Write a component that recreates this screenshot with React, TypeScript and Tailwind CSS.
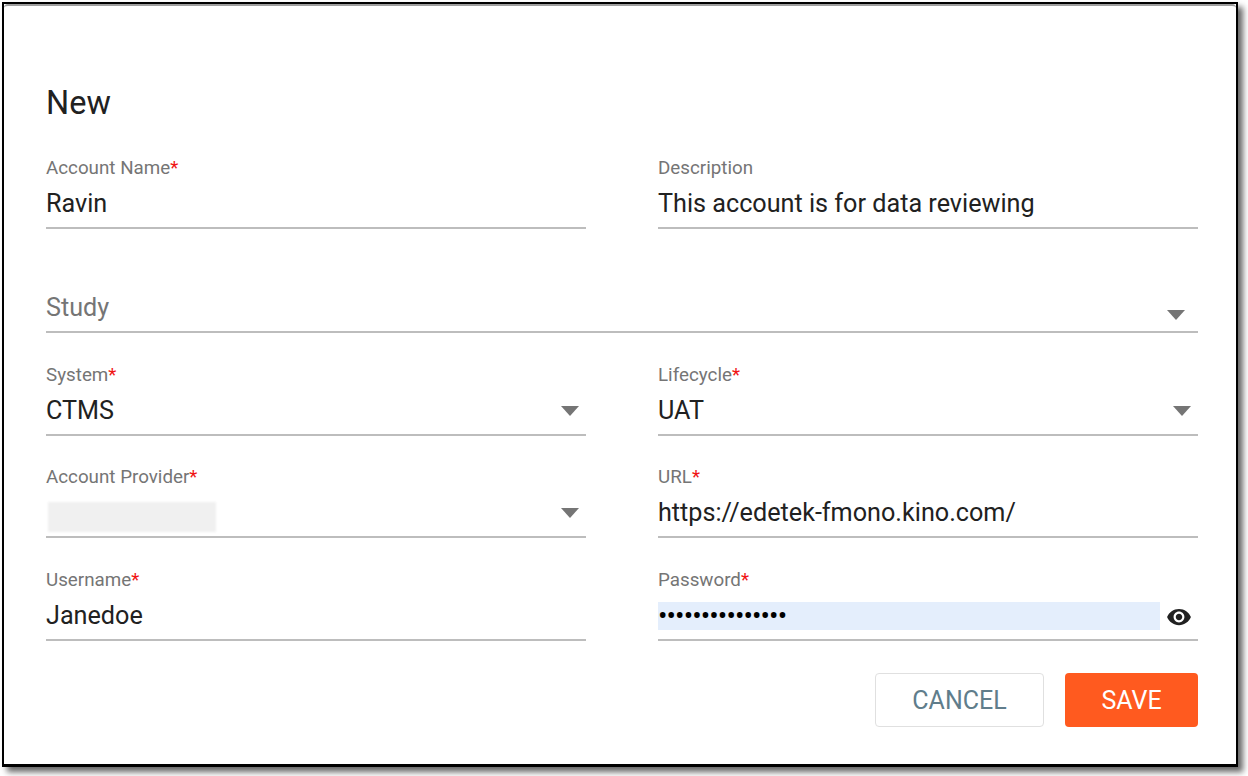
import React from 'react';

function Caret({ className = '' }: { className?: string }) {
  return (
    <svg width="20" height="10" viewBox="0 0 20 10" className={className}>
      <path d="M1 0h18l-9 10z" fill="#757575" />
    </svg>
  );
}

function Label({ text, required }: { text: string; required?: boolean }) {
  return (
    <div className="h-[24px] text-[18.8px] leading-[22px] text-[#757575]">
      {text}
      {required && <span className="text-[#f01414]">*</span>}
    </div>
  );
}

interface FieldProps {
  label: string;
  value?: string;
  required?: boolean;
  select?: boolean;
  children?: React.ReactNode;
}

function Field({ label, value, required, select, children }: FieldProps) {
  return (
    <div className="w-[540px]">
      <Label text={label} required={required} />
      <div className="relative flex h-[48px] items-center border-b-2 border-[#bdbdbd] text-[25.2px] text-[#212121]">
        {children ?? <span>{value}</span>}
        {select && <Caret className="absolute right-[6px] top-[18px]" />}
      </div>
    </div>
  );
}

export default function App() {
  return (
    <div className="h-[776px] w-[1248px] overflow-hidden bg-white font-['Roboto',sans-serif]">
      <div className="ml-[2px] mt-[2px] h-[765px] w-[1236px] border-2 border-b-[3px] border-black bg-white shadow-[5px_5px_6px_rgba(0,0,0,0.6)]">
        <div className="h-full rounded-t-[4px] border-t-2 border-[#9e9e9e] pl-[42px] pr-[38px]">
          <h1 className="pt-[77px] text-[32.5px] font-normal leading-[40px] text-[#212121]">New</h1>

          <div className="mt-[34px] flex justify-between">
            <Field label="Account Name" value="Ravin" required />
            <Field label="Description" value="This account is for data reviewing" />
          </div>

          <div className="relative mt-[32px] flex h-[72px] items-end border-b-2 border-[#bdbdbd] pb-[4px] text-[25.2px] text-[#757575]">
            <span>Study</span>
            <Caret className="absolute right-[12px] top-[49px]" />
          </div>

          <div className="mt-[31px] flex justify-between">
            <Field label="System" value="CTMS" required select />
            <Field label="Lifecycle" value="UAT" required select />
          </div>

          <div className="mt-[30px] flex justify-between">
            <Field label="Account Provider" required select>
              <div className="ml-[2px] mt-[7px] h-[30px] w-[168px] bg-[#f0f0f0] blur-[1px]" />
            </Field>
            <Field label="URL" value="https://edetek-fmono.kino.com/" required />
          </div>

          <div className="mt-[31px] flex justify-between">
            <Field label="Username" value="Janedoe" required />
            <Field label="Password" required>
              <div className="flex h-[28px] w-[502px] items-center bg-[#e4eefc] text-[28px] leading-none tracking-[-0.9px] text-black">
                •••••••••••••••
              </div>
              <svg width="26" height="26" viewBox="0 0 24 24" className="absolute right-[6px] top-[11px]" fill="#212121">
                <path d="M12 4.5C7 4.5 2.73 7.61 1 12c1.73 4.39 6 7.5 11 7.5s9.27-3.11 11-7.5c-1.73-4.39-6-7.5-11-7.5zM12 17c-2.76 0-5-2.24-5-5s2.24-5 5-5 5 2.24 5 5-2.24 5-5 5zm0-8c-1.66 0-3 1.34-3 3s1.34 3 3 3 3-1.34 3-3-1.34-3-3-3z" />
              </svg>
            </Field>
          </div>

          <div className="mt-[32px] flex justify-end gap-[21px]">
            <button type="button" className="h-[54px] w-[169px] rounded-[4px] border border-[#e0e0e0] bg-white pt-[1px] text-[25px] text-[#607d8b]">
              CANCEL
            </button>
            <button type="button" className="h-[54px] w-[133px] rounded-[4px] bg-[#ff5a1f] pt-[1px] text-[25px] text-white">
              SAVE
            </button>
          </div>
        </div>
      </div>
    </div>
  );
}
